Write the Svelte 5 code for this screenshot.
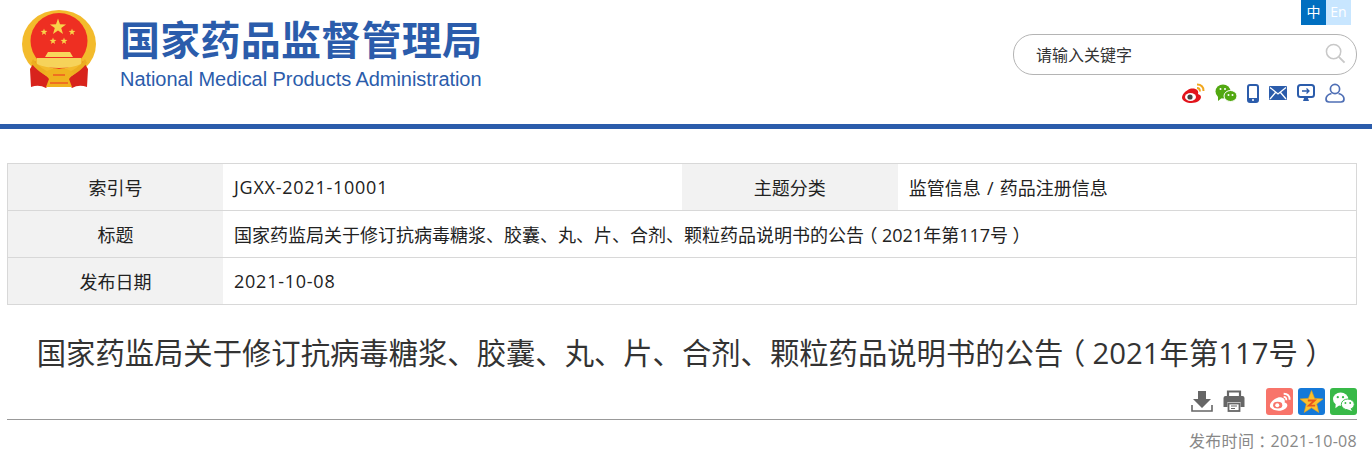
<script>
	const head = '国家药监局关于修订抗病毒糖浆、胶囊、丸、片、合剂、颗粒药品说明书的公告';
	const issue = '2021年第117号';

	// five pointed star as svg points
	function star(cx, cy, r) {
		let pts = [];
		for (let i = 0; i < 10; i++) {
			const rad = i % 2 === 0 ? r : r * 0.4;
			const a = (Math.PI / 5) * i - Math.PI / 2;
			pts.push((cx + rad * Math.cos(a)).toFixed(1) + ',' + (cy + rad * Math.sin(a)).toFixed(1));
		}
		return pts.join(' ');
	}

	const stars = [
		[37, 18, 8.5],
		[23, 23, 3.6],
		[51, 23, 3.6],
		[32, 32, 3.6],
		[43, 32, 3.6]
	];
</script>

{#snippet noticeTitle()}
	{head}<span class="punct">（</span>{issue}<span class="punct">）</span>
{/snippet}

<div class="page">
	<header class="header">
		<div class="brand">
			<svg class="emblem" viewBox="0 0 76 80" width="76" height="80">
				<ellipse cx="38" cy="35" rx="37" ry="34" fill="#f3bb2c" />
				<ellipse cx="38" cy="32" rx="28.5" ry="28" fill="#ee2f22" />
				<path d="M9 60 L10 78 Q18 75 25 79 L33 70 Q18 66 14 52 Z" fill="#d8231c" />
				<path d="M67 60 L66 78 Q58 75 51 79 L43 70 Q58 66 62 52 Z" fill="#d8231c" />
				<path d="M12 50 Q22 64 38 65 Q54 64 64 50 L66 54 Q54 69 38 70 Q22 69 10 54 Z" fill="#ecae20" />
				{#each stars as s}
					<polygon points={star(s[0], s[1], s[2])} fill="#f8d44a" />
				{/each}
				<path d="M27 43 h22 l3 5 h-28 Z" fill="#f8d65c" />
				<path d="M16 49 h44 v6 q-8 4 -22 4 q-14 0 -22 -4 Z" fill="#f6d35a" />
				<path d="M23 64 q8 -6 15 -4 q7 -2 15 4 l-5 6 l3 8 h-26 l3 -8 Z" fill="#f0b21f" />
				<path d="M29 74 h18 M32 66 h12" stroke="#ee2f22" stroke-width="1.2" />
			</svg>
			<div class="brand-text">
				<div class="brand-cn">国家药品监督管理局</div>
				<div class="brand-en">National Medical Products Administration</div>
			</div>
		</div>

		<div class="tools">
			<div class="lang">
				<span class="lang-zh">中</span>
				<span class="lang-en">En</span>
			</div>
			<div class="search">
				<span>请输入关键字</span>
				<svg viewBox="0 0 22 22" width="21" height="21">
					<circle cx="9" cy="9" r="7.5" fill="none" stroke="#c8c8c8" stroke-width="1.6" />
					<path d="M14.5 14.5 L20.5 20.5" stroke="#c8c8c8" stroke-width="2" />
				</svg>
			</div>
			<div class="links">
				<svg viewBox="0 0 24 20" width="24" height="20">
					<path d="M10 5.5 C4 7.5 1 12 1 14.5 C1 18 6 20 10.5 20 C16 20 20 17 20 14 C20 12 18 11.5 17 11 C18 8 16 5 10 5.5 Z" fill="#e2141c" />
					<ellipse cx="9.5" cy="14" rx="5.5" ry="4" fill="#fff" />
					<circle cx="9" cy="14" r="2.6" fill="#444" />
					<path d="M16 1.5 Q22.5 1.5 22.5 8" fill="none" stroke="#f1a71e" stroke-width="2" />
					<path d="M16 5 Q19 5 19 8.5" fill="none" stroke="#f1a71e" stroke-width="1.8" />
				</svg>
				<svg viewBox="0 0 22 18" width="22" height="18">
					<ellipse cx="8" cy="7.5" rx="7.5" ry="7" fill="#52a811" />
					<path d="M3 11 L3 17 L8 13 Z" fill="#52a811" />
					<ellipse cx="15.5" cy="12" rx="6.5" ry="5.5" fill="#52a811" stroke="#fff" stroke-width="1" />
					<circle cx="5.5" cy="5" r="1" fill="#fff" />
					<circle cx="10" cy="5" r="1" fill="#fff" />
					<circle cx="13.5" cy="11" r="1" fill="#fff" />
					<circle cx="17.5" cy="11" r="1" fill="#fff" />
				</svg>
				<svg viewBox="0 0 12 19" width="12" height="19">
					<rect x="1" y="1" width="10" height="17" rx="2" fill="none" stroke="#2b5cab" stroke-width="2" />
					<rect x="1" y="14" width="10" height="4" fill="#2b5cab" />
					<circle cx="6" cy="16" r="1" fill="#fff" />
				</svg>
				<svg viewBox="0 0 18 14" width="18" height="14">
					<rect width="18" height="14" rx="1" fill="#2b5cab" />
					<path d="M1 1.5 L9 8 L17 1.5 M1 13 L6.5 6.5 M17 13 L11.5 6.5" fill="none" stroke="#fff" stroke-width="1.3" />
				</svg>
				<svg viewBox="0 0 18 18" width="18" height="18">
					<rect x="1" y="1" width="16" height="12" rx="2.5" fill="none" stroke="#2b5cab" stroke-width="2" />
					<path d="M6 17 h6 l-1.5 -4 h-3 Z" fill="#2b5cab" />
					<path d="M5 7 h7 M9.5 4.5 L12 7 L9.5 9.5" fill="none" stroke="#2b5cab" stroke-width="1.3" />
				</svg>
				<svg viewBox="0 0 20 20" width="20" height="20">
					<circle cx="10" cy="6" r="4.6" fill="none" stroke="#4f6fb5" stroke-width="1.7" />
					<path d="M6.5 10.5 Q1 12 1 16 Q1 19 4 19 H16 Q19 19 19 16 Q19 12 13.5 10.5" fill="none" stroke="#4f6fb5" stroke-width="1.7" />
				</svg>
			</div>
		</div>
	</header>

	<main class="content">
		<table class="meta">
			<tbody>
				<tr>
					<th>索引号</th>
					<td class="code">JGXX-2021-10001</td>
					<th class="wide">主题分类</th>
					<td class="path">监管信息 / 药品注册信息</td>
				</tr>
				<tr>
					<th>标题</th>
					<td colspan="3">{@render noticeTitle()}</td>
				</tr>
				<tr>
					<th>发布日期</th>
					<td colspan="3" class="code">2021-10-08</td>
				</tr>
			</tbody>
		</table>

		<h1 class="title">{@render noticeTitle()}</h1>

		<div class="share">
			<svg class="download" viewBox="0 0 22 22" width="22" height="22">
				<path d="M7 1 h8 v8 h5 l-9 9 -9 -9 h5 Z" fill="#666" />
				<path d="M1 15 v6 h20 v-6" fill="none" stroke="#666" stroke-width="1.6" />
			</svg>
			<svg class="print" viewBox="0 0 22 22" width="22" height="22">
				<path d="M5 7 V1.5 h12 V7" fill="none" stroke="#666" stroke-width="2.2" />
				<path d="M2.5 6 h17 q2 0 2 2 v9 h-4 v-5 h-13 v5 h-4 v-9 q0 -2 2 -2 Z" fill="#666" />
				<rect x="5.5" y="13.5" width="11" height="7.5" fill="none" stroke="#666" stroke-width="1.8" />
				<path d="M8 16 h6 M8 18.5 h4" stroke="#666" stroke-width="1" />
			</svg>
			<span class="badge weibo">
				<svg viewBox="0 0 24 20" width="22" height="19">
					<path d="M10 5.5 C4 7.5 1 12 1 14.5 C1 18 6 20 10.5 20 C16 20 20 17 20 14 C20 12 18 11.5 17 11 C18 8 16 5 10 5.5 Z" fill="#fff" />
					<ellipse cx="9.5" cy="14" rx="5" ry="3.6" fill="#f8746a" />
					<circle cx="9" cy="14" r="2.2" fill="#fff" />
					<path d="M16 1.5 Q22.5 1.5 22.5 8" fill="none" stroke="#fff" stroke-width="2" />
					<path d="M16 5 Q19 5 19 8.5" fill="none" stroke="#fff" stroke-width="1.8" />
				</svg>
			</span>
			<span class="badge qzone">
				<svg viewBox="0 0 24 24" width="25" height="25">
					<path d="M12 1.5 L15 9 L23 9.5 L17 14.5 L19 22.5 L12 18 L5 22.5 L7 14.5 L1 9.5 L9 9 Z" fill="#fbc02d" stroke="#e8a317" stroke-width="0.6" />
					<path d="M8.5 11 H15 L9.5 16 H15.5" fill="none" stroke="#e8551c" stroke-width="1.8" />
				</svg>
			</span>
			<span class="badge wechat">
				<svg viewBox="0 0 24 22" width="23" height="21">
					<ellipse cx="9" cy="8.5" rx="8" ry="7" fill="#fff" />
					<path d="M4 12 L3.5 18 L9 14 Z" fill="#fff" />
					<ellipse cx="16.5" cy="14" rx="6.8" ry="5.6" fill="#fff" stroke="#38b948" stroke-width="1" />
					<path d="M19 18 L21 21 L16 19 Z" fill="#fff" />
					<circle cx="6" cy="6.5" r="1.2" fill="#38b948" />
					<circle cx="11.5" cy="6.5" r="1.2" fill="#38b948" />
					<circle cx="14" cy="12.5" r="1" fill="#38b948" />
					<circle cx="19" cy="12.5" r="1" fill="#38b948" />
				</svg>
			</span>
		</div>

		<div class="date">发布时间<span class="punct">：</span>2021-10-08</div>
	</main>
</div>

<style>
	:global(body) {
		background: #fff;
	}

	.page {
		font-family: 'Open Sans', 'Noto Sans CJK SC', sans-serif;
		color: #333;
		height: 458px;
		overflow: hidden;
	}

	/* the CJK face pushes these to one side of their box, the original has them centred */
	.punct {
		font-feature-settings: 'halt';
		margin: 0 0.25em;
	}

	.code {
		letter-spacing: 0.75px;
	}

	.header {
		display: flex;
		justify-content: space-between;
		height: 124px;
		border-bottom: 5px solid #2b5cab;
	}

	.brand {
		display: flex;
		padding: 9px 0 0 21px;
		gap: 23px;
	}

	.brand-text {
		padding-top: 7px;
		color: #2b5cab;
	}

	.brand-cn {
		font-family: 'Noto Sans CJK SC', sans-serif;
		font-weight: 700;
		font-size: 40px;
		line-height: 44px;
		letter-spacing: 0.25px;
		white-space: nowrap;
	}

	.brand-en {
		font-family: 'Liberation Sans', sans-serif;
		font-size: 20px;
		line-height: 26px;
		letter-spacing: -0.05px;
		margin-top: 6px;
		white-space: nowrap;
	}

	.tools {
		display: flex;
		flex-direction: column;
		align-items: flex-end;
		width: 345px;
		padding-right: 15px;
	}

	.lang {
		display: flex;
		margin-right: 6px;
		height: 25px;
		font-size: 14px;
		line-height: 23px;
		text-align: center;
		color: #fff;
	}

	.lang span {
		width: 25px;
	}

	.lang-zh {
		background: #006fc0;
	}

	.lang-en {
		background: #c8e6ff;
	}

	.search {
		box-sizing: border-box;
		display: flex;
		justify-content: space-between;
		align-items: center;
		width: 344px;
		height: 41px;
		margin-top: 9px;
		padding: 0 10px 2px 22px;
		border: 1px solid #b4b4b4;
		border-radius: 20px;
		font-size: 16px;
	}

	.links {
		display: flex;
		align-items: center;
		height: 26px;
		gap: 10px;
		margin-top: 5px;
		margin-right: 12px;
	}

	.content {
		padding: 34px 15px 0 7px;
	}

	.meta {
		width: 1350px;
		height: 142px;
		table-layout: fixed;
		border-collapse: collapse;
		border: 1px solid #d8d8d8;
		font-size: 18px;
		color: #222;
	}

	.meta tr {
		height: 47px;
		border-bottom: 1px solid #d8d8d8;
	}

	.meta th {
		width: 215px;
		padding: 0;
		background: #f2f2f2;
		font-weight: 400;
		text-align: center;
	}

	.meta th.wide {
		width: 216px;
	}

	.meta td {
		padding: 0 0 0 11px;
		white-space: nowrap;
	}

	.path {
		word-spacing: 1.5px;
	}

	.title {
		margin: 29px 0 0;
		font-size: 29.33px;
		font-weight: 400;
		line-height: 38px;
		text-align: center;
		white-space: nowrap;
		color: #333;
	}

	.share {
		box-sizing: border-box;
		display: flex;
		justify-content: flex-end;
		align-items: center;
		gap: 5px;
		height: 33px;
		margin-top: 15px;
		padding-bottom: 4px;
		border-bottom: 1px solid #999;
	}

	.download {
		margin-right: 5px;
	}

	.print {
		margin-right: 16px;
	}

	.badge {
		display: flex;
		align-items: center;
		justify-content: center;
		width: 27px;
		height: 27px;
		border-radius: 3px;
	}

	.weibo {
		background: #f8746a;
	}

	.qzone {
		background: #1579d8;
	}

	.wechat {
		background: #38b948;
	}

	.date {
		margin-top: 10px;
		font-size: 16px;
		line-height: 22px;
		text-align: right;
		letter-spacing: 0.3px;
		color: #888;
	}
</style>
